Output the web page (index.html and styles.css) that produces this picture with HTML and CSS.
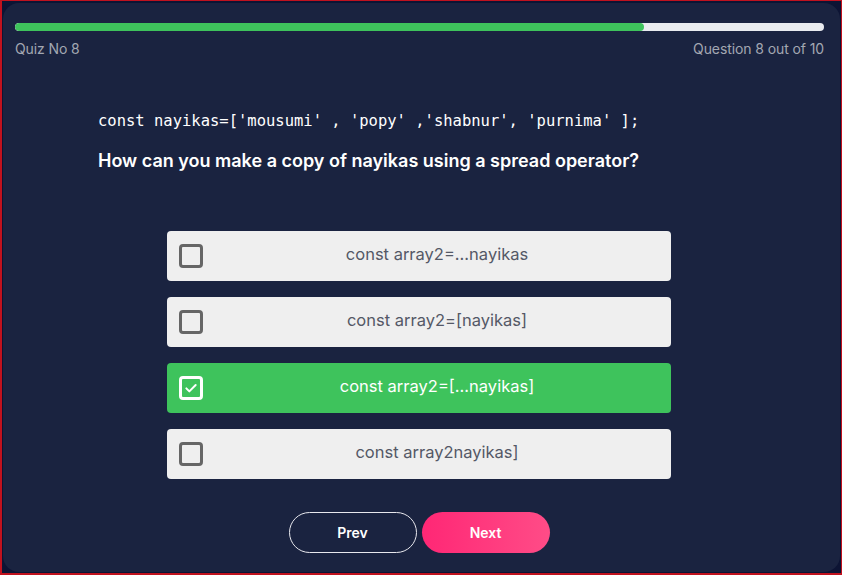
FILE: index.html
```html
<!DOCTYPE html>
<html>
<head>
<meta charset="utf-8">
<link rel="stylesheet" href="styles.css">
</head>
<body>
<div class="frame">
  <div class="card">
    <div class="progress"><div class="progress-fill"></div></div>
    <div class="meta">
      <span>Quiz No 8</span>
      <span>Question 8 out of 10</span>
    </div>
    <div class="content">
      <div class="code">const nayikas=['mousumi' , 'popy' ,'shabnur', 'purnima' ];</div>
      <div class="question">How can you make a copy of nayikas using a spread operator?</div>
    </div>
    <div class="options">
      <div class="option"><span class="box"></span><span class="label">const array2=...nayikas</span></div>
      <div class="option"><span class="box"></span><span class="label">const array2=[nayikas]</span></div>
      <div class="option selected"><span class="box"><svg viewBox="0 0 24 24" width="16" height="16"><path d="M5 12.5l4.5 4.5L19 7.5" fill="none" stroke="#fff" stroke-width="3" stroke-linecap="round" stroke-linejoin="round"/></svg></span><span class="label">const array2=[...nayikas]</span></div>
      <div class="option"><span class="box"></span><span class="label">const array2nayikas]</span></div>
    </div>
    <div class="buttons">
      <button class="btn prev">Prev</button>
      <button class="btn next">Next</button>
    </div>
  </div>
</div>
</body>
</html>
```
FILE: styles.css
```css
html, body { margin: 0; padding: 0; }
body { font-family: "Inter", "Open Sans", sans-serif; }
.frame {
  width: 842px; height: 575px; box-sizing: border-box;
  border: 1px solid #c0121e; border-left-width: 2px; border-bottom-width: 2px;
  background: #0d1434;
  padding: 2px 1px 1px 1px;
}
.card {
  height: 100%; box-sizing: border-box;
  background: #1a2340;
  border-radius: 16px;
  padding: 20px 16px 0 12px;
}
.progress { height: 8px; background: #e9ebef; border-radius: 4px; overflow: hidden; }
.progress-fill { width: 77.7%; height: 100%; background: #3ec35c; border-radius: 4px; }
.meta {
  display: flex; justify-content: space-between;
  margin-top: 8px; line-height: 20px; font-size: 14px;
  color: #a3a7b2; letter-spacing: -0.1px;
}
.content { padding-left: 83px; }
.code {
  margin-top: 52px; line-height: 20px;
  font-family: "DejaVu Sans Mono", monospace; font-size: 15.5px; color: #fff;
}
.question {
  margin-top: 18px; line-height: 24px;
  font-size: 18px; font-weight: 600; color: #fff;
}
.options {
  margin: 58px 0 0 152px; width: 504px;
  display: flex; flex-direction: column; gap: 16px;
}
.option {
  height: 50px; background: #efefef; border-radius: 4px;
  display: flex; align-items: center; padding-left: 12px;
  color: #545866; font-size: 16.5px;
}
.box {
  width: 24px; height: 24px; box-sizing: border-box;
  border: 3px solid #666; border-radius: 4px;
  display: flex; align-items: center; justify-content: center;
}
.label { flex: 1; text-align: center; padding-bottom: 4px; }
.option.selected { background: #3ec35c; color: #fff; }
.option.selected .box { border-color: #fff; }
.buttons {
  margin: 33px 0 0 152px; width: 504px;
  display: flex; justify-content: center; gap: 5px;
}
.btn {
  width: 128px; height: 41px; border-radius: 21px;
  font-family: inherit; font-size: 14px; font-weight: 600; color: #fff;
  cursor: pointer;
}
.prev { background: transparent; border: 1px solid #e8e8ee; }
.next { background: linear-gradient(90deg, #ff2775, #ff4c87); border: none; }
```
